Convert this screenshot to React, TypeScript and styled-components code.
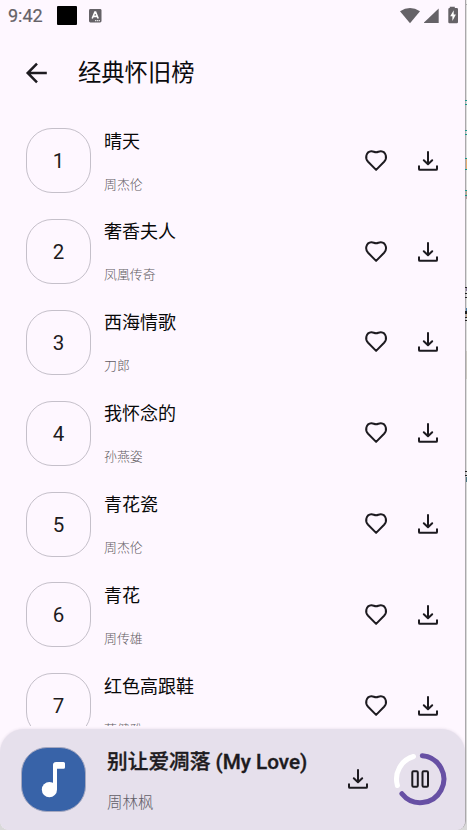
import React from "react";
import styled, { createGlobalStyle } from "styled-components";

const GlobalStyle = createGlobalStyle`
  *, *::before, *::after { box-sizing: border-box; }
  html, body { margin: 0; padding: 0; overflow: hidden; background: #d9d9d9; }
  body { font-family: Roboto, "Noto Sans CJK SC", sans-serif; color: #1d1b20; }
  svg { display: block; flex: none; }
`;

const Desktop = styled.div`
  display: flex;
  width: 467px;
  height: 830px;
  overflow: hidden;
  background: #d9d9d9;
`;

const Phone = styled.main`
  display: flex;
  flex-direction: column;
  flex: none;
  width: 466px;
  height: 830px;
  border-right: 1px solid #aaa8ab;
  border-radius: 0 0 9px 9px;
  background: #fef7ff;
  overflow: hidden;
`;

const Backdrop = styled.aside`
  position: relative;
  width: 2px;
  margin-left: -1px;
  flex: none;
  display: flex;
  flex-direction: column;
`;

const Sliver = styled.i<{ $h: number; $c: string }>`
  flex: none;
  height: ${(p) => p.$h}px;
  margin-left: ${(p) => (p.$c === "#16968b" || p.$c === "#222" ? "0" : "1px")};
  background: ${(p) => p.$c};
`;

const StatusBar = styled.header`
  display: flex;
  align-items: center;
  flex: none;
  height: 32px;
  padding: 0 7px 0 8px;
  color: #656267;
`;

const Clock = styled.time`
  width: 49px;
  font-size: 18px;
  line-height: 32px;
  -webkit-text-stroke: 0.2px #656267;
`;

const BlackSquare = styled.span`
  width: 20px;
  height: 19px;
  margin: -1px 12px 0 0;
  border-radius: 1px;
  background: #000;
`;

const StatusIcons = styled.div`
  margin-left: auto;
`;

const TitleBar = styled.div`
  display: flex;
  align-items: center;
  flex: none;
  height: 82px;
  padding: 0 0 0 24px;
`;

const Title = styled.h1`
  margin: 0 0 0 29px;
  font-size: 23.3px;
  font-weight: 400;
  line-height: 34px;
  color: #0c0b0e;
`;

const SongList = styled.ol`
  flex: none;
  height: 612px;
  margin: 0;
  padding: 14.3px 0 0;
  list-style: none;
  overflow: hidden;
`;

const SongRow = styled.li`
  display: flex;
  align-items: flex-start;
  height: 90.83px;
  padding: 0 25px 0 26px;
`;

const Rank = styled.div`
  display: flex;
  align-items: center;
  justify-content: center;
  flex: none;
  width: 65px;
  height: 65px;
  padding-top: 1px;
  border: 1px solid #c5c0ca;
  border-radius: 26px;
  font-size: 20.5px;
`;

const SongText = styled.div`
  flex: 1;
  margin-left: 13px;
  padding-top: 0.3px;
`;

const SongName = styled.div`
  height: 26px;
  font-size: 18px;
  line-height: 26px;
  color: #080808;
`;

const Artist = styled.div`
  margin-top: 20px;
  font-size: 12.9px;
  font-weight: 300;
  line-height: 20px;
  color: #5e5b61;
`;

const Actions = styled.div`
  display: flex;
  gap: 28px;
  height: 65px;
  align-items: center;
`;

const Player = styled.footer`
  display: flex;
  align-items: flex-start;
  flex: none;
  position: relative;
  height: 101.4px;
  margin-top: 2.6px;
  padding: 18.4px 18px 0 21px;
  border-radius: 24px 24px 0 0;
  background: #e6e0ec;
  box-shadow: 0 0 3px rgba(60, 45, 80, 0.15);
`;

const Cover = styled.div`
  flex: none;
  width: 65px;
  height: 65px;
  border: 1px solid #a5a8c0;
  border-radius: 26px;
  background: #3863a8;
  overflow: hidden;
`;

const NowPlaying = styled.div`
  flex: 1;
  margin-left: 21px;
`;

const PlayingName = styled.div`
  height: 30px;
  font-size: 20.7px;
  font-weight: 500;
  line-height: 30px;
  white-space: nowrap;
  -webkit-text-stroke: 0.35px #1d1b20;
`;

const PlayingArtist = styled.div`
  margin-top: 14px;
  font-size: 15.5px;
  font-weight: 300;
  line-height: 24px;
  color: #625e68;
`;

const PlayerActions = styled.div`
  display: flex;
  align-items: center;
  gap: 23px;
  height: 64px;
`;

const HeartIcon = () => (
  <svg width="24" height="24" viewBox="0 0 24 24" fill="none" stroke="#1d1b20" strokeWidth="2" strokeLinejoin="round">
    <path d="M12.1 20.9 L4.1 12.8 C2.4 11 1.8 8.8 2.4 6.6 C3.1 3.9 5.1 2.4 7.3 2.3 C9.2 2.2 10.2 3.2 12.1 3.2 C14 3.2 15 2.2 16.9 2.3 C19.1 2.4 21.1 3.9 21.8 6.6 C22.4 8.8 21.8 11 20.1 12.8 Z" />
  </svg>
);

const DownloadIcon = () => (
  <svg width="24" height="24" viewBox="0 0 24 24" fill="none" stroke="#1d1b20" strokeWidth="2" strokeLinecap="round" strokeLinejoin="round">
    <path d="M12 3v11.8M7.8 11.2 12 15.2l4.2-4M3 17.3v2.6q0 .9.9.9h16.2q.9 0 .9-.9v-2.6" />
  </svg>
);

const KeyboardIcon = () => (
  <svg width="13" height="14" viewBox="0 0 13 14">
    <rect width="12.5" height="13.5" rx="1.4" fill="#656267" />
    <path d="M3.2 9.5 5.9 3h.7l2.6 6.5M4.4 7.4h3.7" fill="none" stroke="#fff" strokeWidth="1.6" />
    <path d="M6 11.7h5" stroke="#fff" strokeWidth="1" strokeDasharray="1.4 .5" />
  </svg>
);

const SystemIcons = () => (
  <svg width="60" height="20" viewBox="0 0 60 20" fill="#656267">
    <path d="M2 5.3 Q12 -1.5 22 5.3 L12 17.3Z" />
    <path d="M26 17V16.4L40.7 2.5V17Z" />
    <path d="M51.8 2V.8h5V2h2q1.2 0 1.2 1.2v12.9q0 1.2-1.2 1.2h-7.3q-1.2 0-1.2-1.2V3.2Q50.3 2 51.5 2Z" />
    <path d="M55.7 4.2 52.2 10.3h2.2v4.7l3.5-6.4h-2.2Z" fill="#fff" />
  </svg>
);

const BackIcon = () => (
  <svg width="25" height="24" viewBox="0 0 25 24" fill="none" stroke="#1d1b20" strokeWidth="2.5">
    <path d="M22.8 12H4M13 2.7 3.7 12l9.3 9.3" />
  </svg>
);

const NoteIcon = () => (
  <svg width="63" height="63" viewBox="0 0 63 63" fill="#fff">
    <circle cx="27.4" cy="41.7" r="7.6" />
    <path d="M31 41.7V17q0-3 3-3h7.5q1.5 0 1.5 1.5v3.7q0 1.5-1.5 1.5H35v21Z" />
  </svg>
);

const ProgressPause = () => (
  <svg width="54" height="54" viewBox="0 0 54 54" fill="none" strokeLinecap="round">
    <path d="M29.3 3.7A23.5 23.5 0 1 1 8.9 41.7" stroke="#6750a4" strokeWidth="5" />
    <path d="M4.4 33.5A23.5 23.5 0 0 1 20.5 4.5" stroke="#fff" strokeWidth="5" />
    <rect x="19.3" y="19.3" width="5.5" height="15.5" rx="1.2" stroke="#1d1b20" strokeWidth="2" />
    <rect x="29.5" y="19.3" width="5.5" height="15.5" rx="1.2" stroke="#1d1b20" strokeWidth="2" />
  </svg>
);

const songs = [
  ["晴天", "周杰伦"],
  ["奢香夫人", "凤凰传奇"],
  ["西海情歌", "刀郎"],
  ["我怀念的", "孙燕姿"],
  ["青花瓷", "周杰伦"],
  ["青花", "周传雄"],
  ["红色高跟鞋", "蔡健雅"],
];

const slivers: [number, string][] = [
  [4, "#e8e8e8"], [1, "#aaa"], [95, "#dedede"], [1, "#16968b"], [3, "#dedede"],
  [1, "#16968b"], [25, "#dedede"], [1, "#16968b"], [3, "#dedede"], [1, "#16968b"],
  [23, "#dedede"], [1, "#16968b"], [10, "#e5ad73"], [1, "#16968b"], [20, "#dedede"],
  [1, "#16968b"], [4, "#bba887"], [1, "#16968b"], [3, "#b99aa0"], [88, "#dedede"],
  [1, "#222"], [3, "#8c7aa0"], [2, "#dedede"], [1, "#222"], [3, "#dedede"], [1, "#222"],
  [10, "#dedede"], [3, "#477ca8"], [3, "#222"], [3, "#c5a78c"], [1, "#222"], [2, "#dedede"],
  [1, "#222"], [30, "#dedede"], [28, "#cbc8c2"], [92, "#dedede"], [1, "#222"],
  [3, "#dedede"], [1, "#222"], [1, "#dedede"], [5, "#4c7886"],
];

export default function App() {
  return (
    <Desktop>
      <GlobalStyle />
      <Phone>
        <StatusBar>
          <Clock>9:42</Clock>
          <BlackSquare />
          <KeyboardIcon />
          <StatusIcons><SystemIcons /></StatusIcons>
        </StatusBar>
        <TitleBar>
          <BackIcon />
          <Title>经典怀旧榜</Title>
        </TitleBar>
        <SongList>
          {songs.map(([name, artist], index) => (
            <SongRow key={name}>
              <Rank>{index + 1}</Rank>
              <SongText>
                <SongName>{name}</SongName>
                <Artist>{artist}</Artist>
              </SongText>
              <Actions><HeartIcon /><DownloadIcon /></Actions>
            </SongRow>
          ))}
        </SongList>
        <Player>
          <Cover><NoteIcon /></Cover>
          <NowPlaying>
            <PlayingName>别让爱凋落 (My Love)</PlayingName>
            <PlayingArtist>周林枫</PlayingArtist>
          </NowPlaying>
          <PlayerActions><DownloadIcon /><ProgressPause /></PlayerActions>
        </Player>
      </Phone>
      <Backdrop>
        {slivers.map(([height, color], index) => <Sliver key={index} $h={height} $c={color} />)}
      </Backdrop>
    </Desktop>
  );
}
